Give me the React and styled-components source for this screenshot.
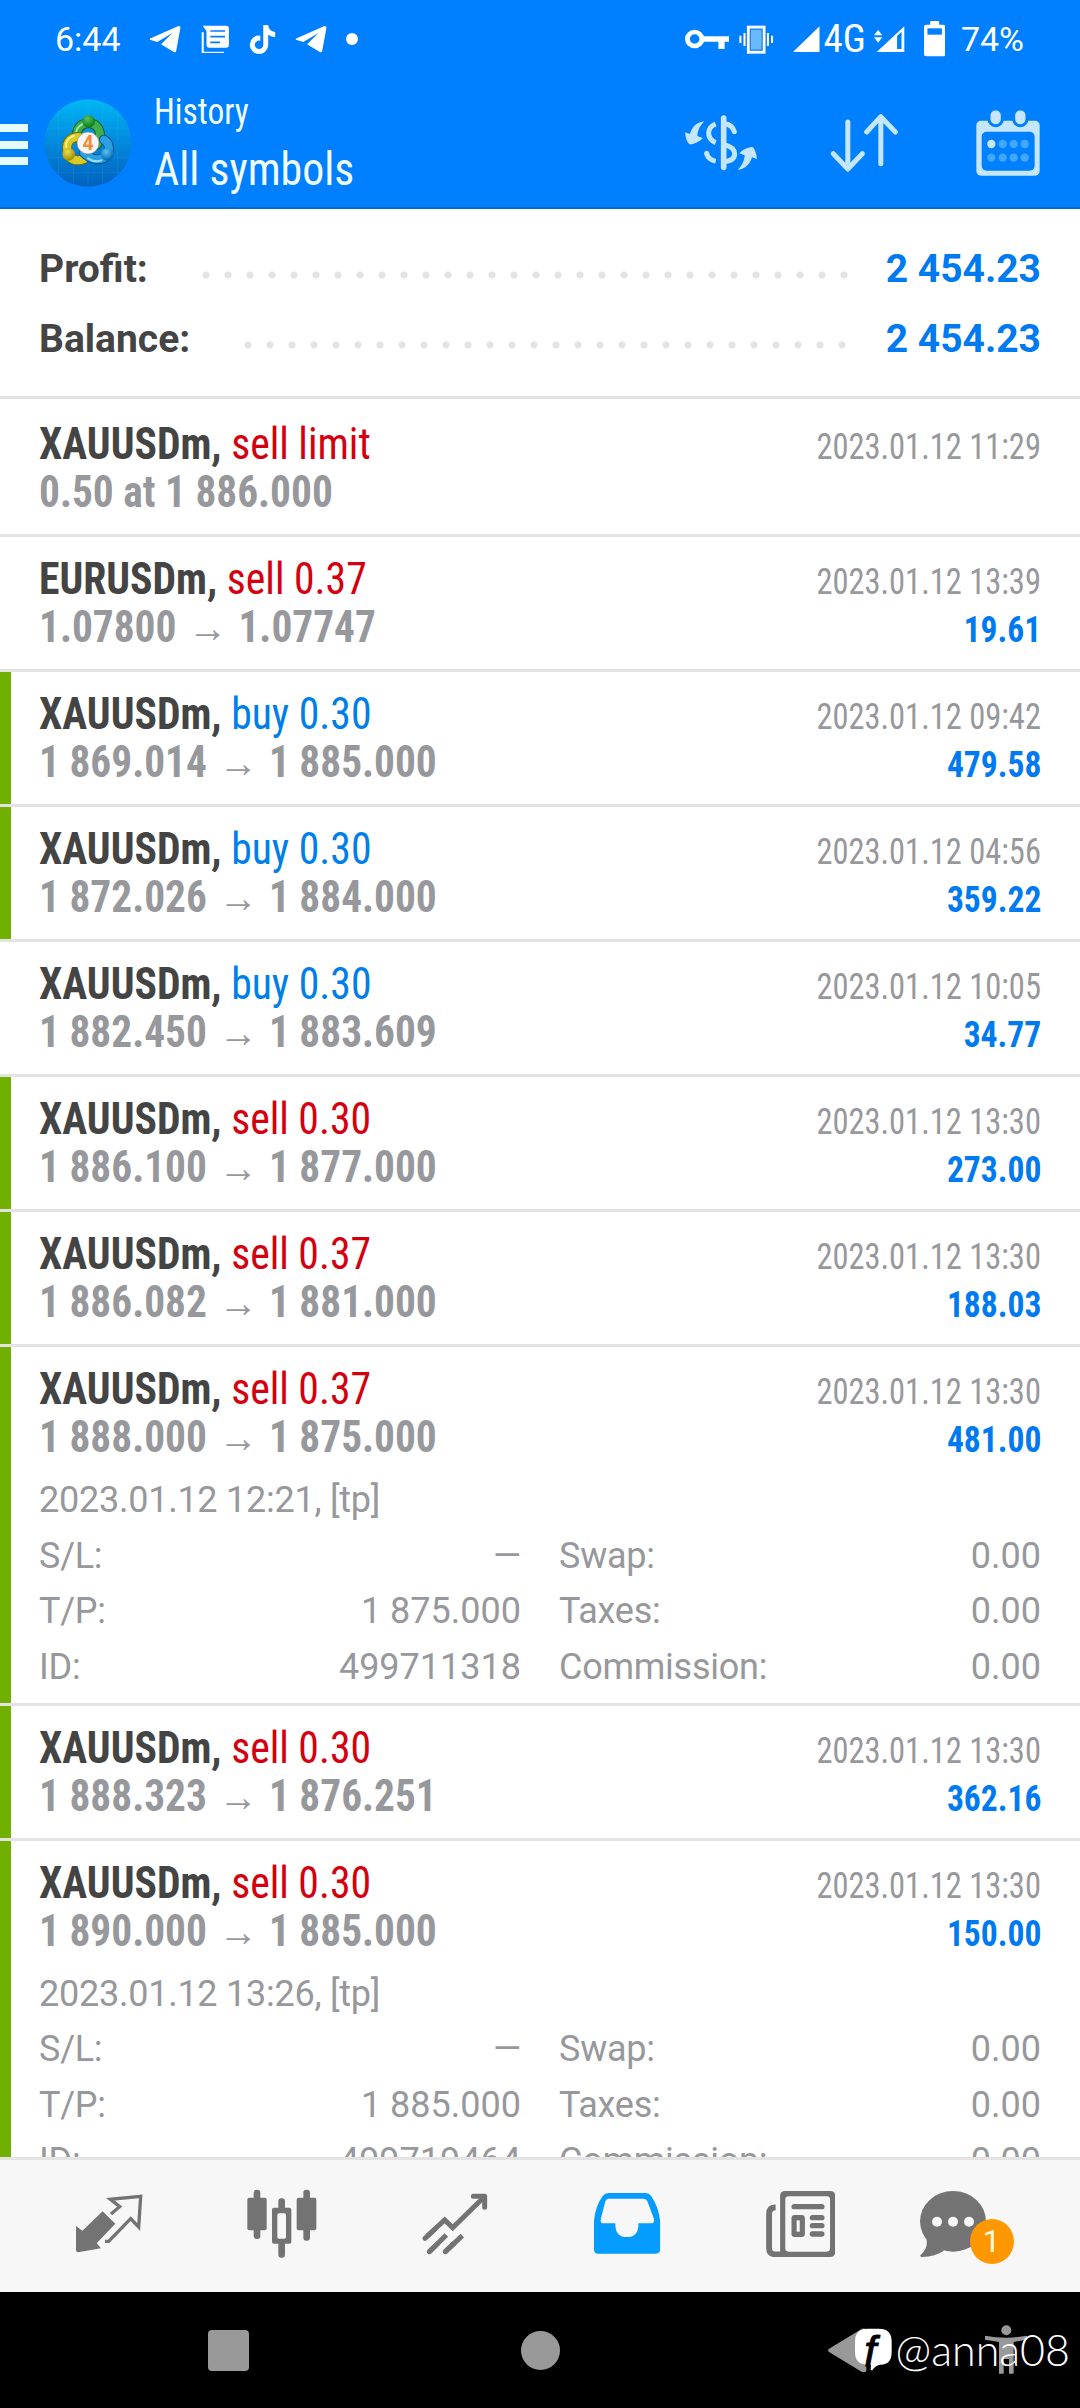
import React from 'react';
import styled, { createGlobalStyle } from 'styled-components';
import { FaTiktok } from 'react-icons/fa';

const GlobalStyle = createGlobalStyle`
  * {
    box-sizing: border-box;
  }
  body {
    margin: 0;
    background: #fff;
    font-family: Roboto, sans-serif;
  }
  svg {
    display: block;
    flex: none;
  }
`;

const condensed = "'Roboto Condensed', Roboto, sans-serif";

const StyledPhone = styled.div`
  width: 1080px;
  height: 2408px;
  display: flex;
  flex-direction: column;
  overflow: hidden;
  position: relative;
`;
const StyledHeader = styled.header`
  height: 209px;
  flex: none;
  background: #007fff;
  border-bottom: 2px solid #0069c9;
  color: #f0fdff;
`;
const StyledStatusBar = styled.div`
  height: 78px;
  display: flex;
  align-items: center;
  justify-content: space-between;
  padding: 0 56px 0 55px;
  color: #fff;
  font-size: 34px;
`;
const StyledStatusGroup = styled.div`
  display: flex;
  align-items: center;
  gap: ${({ $gap }) => $gap}px;
`;
const StyledStatusItem = styled.span`
  margin: 0 ${({ $right }) => $right || 0}px 0 ${({ $left }) => $left || 0}px;
`;
const StyledNetwork = styled.span`
  font-family: ${condensed};
  font-size: 39px;
  line-height: 39px;
  margin: 0 -2px 0 -6px;
`;
const StyledStatusDot = styled.i`
  width: 12px;
  height: 12px;
  margin-left: -2px;
  border-radius: 50%;
  background: #fff;
`;
const StyledToolbar = styled.div`
  height: 129px;
  display: flex;
  align-items: center;
`;
const StyledMenu = styled.div`
  width: 28px;
  height: 41px;
  margin-right: 16px;
  margin-top: 4px;
  display: flex;
  flex-direction: column;
  justify-content: space-between;

  i {
    height: 8px;
    background: #e6fbff;
  }
`;
const StyledTitle = styled.div`
  flex: 1;
  margin-left: 22px;
  font-family: ${condensed};
  transform-origin: 0 50%;
  transform: scaleX(0.932);
`;
const StyledSmallTitle = styled.div`
  font-size: 36px;
  line-height: 51px;
`;
const StyledBigTitle = styled.div`
  font-size: 47px;
  line-height: 61px;
`;
const StyledActions = styled.div`
  display: flex;
  align-items: center;
  margin-right: 40px;
  gap: 71px;
`;
const StyledSummary = styled.section`
  flex: none;
  padding: 25px 39px 22px;
  height: 190px;
  border-bottom: 3px solid #e3e3e3;
`;
const StyledSummaryRow = styled.div`
  display: flex;
  height: 70px;
  line-height: 70px;
  font-size: 39px;
  font-weight: 700;
  color: #444;
`;
const StyledDots = styled.div`
  flex: 1;
  height: 8px;
  margin: 37px 28px 0 47px;
  background: radial-gradient(circle, #e3e3e3 3.2px, transparent 3.9px) 0 0 /
    22px 8px;
`;
const StyledAmount = styled.span`
  color: #007af0;
`;
const StyledList = styled.main`
  flex: 1;
  min-height: 0;
  overflow: hidden;
  padding-top: 3px;
`;
const StyledDeal = styled.article`
  border-bottom: 3px solid #e3e3e3;
  background: linear-gradient(#70b000, #70b000) no-repeat 0 0 /
    ${({ $closedByTp }) => ($closedByTp ? '11px' : '0')} 100%;
  background-clip: padding-box;
  padding: 18px 39px ${({ $open }) => ($open ? '7px' : '17px')};
`;
const StyledDealLine = styled.div`
  display: flex;
  justify-content: space-between;
  align-items: baseline;
  height: ${({ $h }) => $h}px;
  line-height: ${({ $h }) => $h}px;
  font-family: ${condensed};
  white-space: pre;
`;
const StyledSymbol = styled.span`
  font-size: 44px;
  font-weight: 700;
  color: #444;
  transform-origin: 0 50%;
  transform: scaleX(0.947);
`;
const StyledSide = styled.span`
  font-weight: 400;
  color: ${({ $side }) => ($side === 'buy' ? '#007fea' : '#d4000f')};
`;
const StyledPrice = styled.span`
  font-size: 44px;
  font-weight: 700;
  color: #97989c;
  transform-origin: 0 50%;
  transform: scaleX(0.94);
`;
const StyledArrow = styled.span`
  display: inline-block;
  width: 66px;
  text-align: center;
  font-size: 42px;
  font-weight: 400;
`;
const StyledDate = styled.span`
  font-size: 36px;
  color: #97989c;
  transform-origin: 100% 50%;
  transform: scaleX(0.902);
`;
const StyledProfit = styled.span`
  font-size: 36px;
  font-weight: 700;
  color: #007af0;
  transform-origin: 100% 50%;
  transform: scaleX(0.932);
`;
const StyledDetails = styled.div`
  margin-top: 11px;
  display: grid;
  grid-template-columns: 1fr 1fr;
  column-gap: 38px;
  font-size: 36px;
  line-height: 55.67px;
  color: #97989c;
`;
const StyledOpened = styled.div`
  grid-column: 1 / -1;
  letter-spacing: -0.25px;
`;
const StyledField = styled.div`
  display: flex;
  justify-content: space-between;
`;
const StyledFieldLabel = styled.span`
  letter-spacing: -0.25px;
`;
const StyledTabs = styled.nav`
  flex: none;
  height: 135px;
  border-top: 3px solid #e3e3e3;
  background: #f7f7f7;
  display: grid;
  grid-template-columns: repeat(6, 173px);
  padding: 0 0 5px 22px;
`;
const StyledTab = styled.div`
  display: flex;
  align-items: center;
  justify-content: center;
  padding-right: ${({ $shift }) => $shift || 0}px;
`;
const StyledChat = styled.div`
  position: relative;
`;
const StyledBadge = styled.span`
  position: absolute;
  left: 50px;
  top: 28px;
  width: 44px;
  height: 45px;
  border-radius: 50%;
  background: #ff9800;
  color: #fffbe0;
  font-size: 31px;
  line-height: 46px;
  text-align: center;
`;
const StyledSystemBar = styled.footer`
  flex: none;
  height: 116px;
  background: #000;
  display: flex;
  align-items: center;
  padding-left: 208px;
`;
const StyledRecent = styled.i`
  width: 41px;
  height: 41px;
  border-radius: 4px;
  background: #999;
`;
const StyledHome = styled.i`
  width: 39px;
  height: 39px;
  border-radius: 50%;
  background: #999;
  margin: 0 268px 0 272px;
`;
const StyledAccessibility = styled.div`
  margin-left: 118px;
`;
const StyledWatermark = styled.div`
  position: absolute;
  right: 10px;
  bottom: 33px;
  display: flex;
  align-items: center;
  gap: 4px;
  color: #fff;
  font-family: Lato, sans-serif;
  font-weight: 300;
  font-size: 43px;
  line-height: 50px;
`;

const header = '#007fff';
const pale = '#c5e6ff';
const gray = '#737373';
const tabsBg = '#f7f7f7';

// x, y, w, h are in drawing units, the scales turn them into pixels
const Icon = ({ box, sx = 3, sy = 3, children, ...rest }) => (
  <svg
    width={box[2] / sx}
    height={box[3] / sy}
    viewBox={box.join(' ')}
    preserveAspectRatio="none"
    {...rest}
  >
    {children}
  </svg>
);

const TelegramIcon = () => (
  <Icon box={[432, 76, 94, 84]} sx={2.904} fill="#fff">
    <path d="M437 116 L516 80 Q524 77 523 86 L511 154 Q509 160 503 156 L467 134 L500 100 L456 127 L437 121 Q431 119 437 116Z" />
  </Icon>
);

const NewsStatusIcon = () => (
  <Icon box={[579, 72, 82, 86]} sx={2.904}>
    <path d="M584 94 V155 H646" fill="none" stroke="#fff" strokeWidth="6" />
    <path
      d="M584 74 H652 Q660 74 660 82 V132 Q660 140 652 140 H603 Q595 140 595 132 V90Z"
      fill="#fff"
    />
    <path
      d="M606 90 H649 M606 107 H649 M606 124 H634"
      stroke={header}
      strokeWidth="5"
    />
  </Icon>
);

const KeyIcon = () => (
  <Icon box={[420, 85, 130, 62]} sx={2.904}>
    <circle cx="448" cy="115" r="21" fill="none" stroke="#fff" strokeWidth="14" />
    <path d="M472 107 H549 V123 H535 V145 H517 V123 H472Z" fill="#fff" />
  </Icon>
);

const VibrateIcon = () => (
  <Icon box={[580, 72, 100, 87]} sx={2.904}>
    <rect x="607" y="78" width="46" height="76" fill="#6bbaff" stroke="#fff" strokeWidth="8" />
    <rect x="613" y="85" width="34" height="62" fill="none" stroke="#1a7fe0" strokeWidth="3" />
    <path
      d="M596 96 V135 M584 104 V126 M664 96 V135 M676 104 V126"
      stroke="#fff"
      strokeWidth="6"
    />
  </Icon>
);

const SignalIcon = () => (
  <Icon box={[736, 77, 78, 79]} sx={2.904}>
    <path d="M736 155 H813 V78Z" fill="#fff" />
  </Icon>
);

const SignalDataIcon = () => (
  <Icon box={[973, 77, 89, 79]} sx={2.904}>
    <path d="M981 155 H1061 V78Z" fill="#fff" />
    <path d="M1040 107 L1053 94 V146 H1040Z" fill={header} />
    <path d="M973 105 H997 L985 89Z M973 111 H997 L985 127Z" fill="#fff" />
  </Icon>
);

const BatteryIcon = () => (
  <Icon box={[1117, 61, 62, 107]} sx={2.904}>
    <rect x="1135" y="61" width="26" height="20" rx="3" fill="#fff" />
    <rect x="1117" y="72" width="62" height="95" rx="7" fill="#fff" />
    <rect x="1127" y="83" width="42" height="19" fill={header} />
  </Icon>
);

const AccountIcon = () => (
  <Icon box={[132, 28, 264, 264]}>
    <defs>
      <linearGradient id="sky" x1="0" y1="0" x2="0" y2="1">
        <stop offset="0" stopColor="#00b7f5" />
        <stop offset="0.5" stopColor="#0288dc" />
        <stop offset="1" stopColor="#0062bd" />
      </linearGradient>
      <radialGradient id="greenBall" cx="0.4" cy="0.3" r="0.7">
        <stop offset="0" stopColor="#5cc060" />
        <stop offset="1" stopColor="#067a1c" />
      </radialGradient>
      <radialGradient id="yellowBall" cx="0.4" cy="0.3" r="0.7">
        <stop offset="0" stopColor="#eedc50" />
        <stop offset="1" stopColor="#9a8c00" />
      </radialGradient>
      <radialGradient id="blueBall" cx="0.4" cy="0.3" r="0.7">
        <stop offset="0" stopColor="#5cc4f5" />
        <stop offset="1" stopColor="#0064b0" />
      </radialGradient>
    </defs>
    <circle cx="264" cy="160" r="131" fill="url(#sky)" />
    <path
      d="M176 64 V256 M220 38 V282 M264 29 V291 M308 38 V282 M352 64 V256 M145 115 H383 M134 160 H394 M139 204 H389 M166 248 H362"
      stroke="#5fc8ff"
      strokeOpacity="0.18"
      strokeWidth="2"
    />
    <g fill="none" strokeLinecap="round">
      <path d="M231 146 C228 118 240 102 266 100 C292 102 304 122 299 150 L290 165" stroke="#14591f" strokeWidth="30" />
      <path d="M231 146 C228 118 240 102 266 100 C292 102 304 122 299 150 L290 165" stroke="#3fae4d" strokeWidth="24" />
      <path d="M228 126 C232 112 242 104 256 100" stroke="#a5e0a0" strokeWidth="6" />
      <path d="M236 142 C206 142 196 164 204 192 C212 212 230 216 252 208" stroke="#756c08" strokeWidth="30" />
      <path d="M236 142 C206 142 196 164 204 192 C212 212 230 216 252 208" stroke="#d9cb26" strokeWidth="24" />
      <path d="M198 172 C196 156 206 142 222 138" stroke="#f7f08a" strokeWidth="6" />
      <path d="M312 150 C330 160 330 182 320 200 C302 214 274 212 252 190" stroke="#07508c" strokeWidth="30" />
      <path d="M312 150 C330 160 330 182 320 200 C302 214 274 212 252 190" stroke="#2aa0e0" strokeWidth="24" />
      <path d="M264 206 C278 216 292 216 304 212" stroke="#9adcff" strokeWidth="6" />
    </g>
    <circle cx="266" cy="95" r="19" fill="url(#greenBall)" />
    <circle cx="206" cy="194" r="19" fill="url(#yellowBall)" />
    <circle cx="322" cy="194" r="19" fill="url(#blueBall)" />
    <circle cx="264" cy="160" r="33" fill="#f6f6f6" stroke="#8a8a80" strokeWidth="2" />
    <text x="264" y="181" fontSize="58" fontWeight="700" textAnchor="middle" fill="#f58a33">
      4
    </text>
  </Icon>
);

const DollarIcon = () => (
  <Icon box={[45, 38, 225, 172]}>
    <g fill="none" stroke={pale} strokeWidth="15">
      <path d="M164 50 V198" strokeWidth="17" strokeLinecap="round" />
      <path d="M168 67 Q190 70 196 91" strokeLinecap="round" />
      <path d="M166 130 Q197 138 197 158 Q197 178 166 181" />
      <path d="M140 68 Q119 76 119 95 Q119 115 140 124" />
      <path d="M113 157 Q118 175 140 180" />
    </g>
    <circle cx="113" cy="156" r="7.500" fill={pale} />
    <g fill={pale}>
      <path
        id="swing"
        d="M106 60 C86 62 70 74 63 98 L48 93 C50 110 54 124 62 129 C72 129 92 122 101 110 L85 104 C86 86 94 72 106 60Z"
      />
      <use href="#swing" transform="rotate(180 156 133)" />
    </g>
  </Icon>
);

const SortIcon = () => (
  <Icon box={[482, 38, 224, 178]}>
    <path
      d="M535.500 65 V204 M492 160 L535.500 206 L579 160 M634.500 190 V50 M592 95 L634.500 49 L678 95"
      fill="none"
      stroke={pale}
      strokeWidth="15"
      strokeLinecap="round"
      strokeLinejoin="round"
    />
  </Icon>
);

const CalendarIcon = () => (
  <Icon box={[919, 22, 192, 202]}>
    <rect x="920" y="57" width="190" height="165" rx="14" fill={pale} />
    <rect x="936" y="90" width="159" height="117" rx="15" fill={header} />
    <g fill={pale} stroke={header} strokeWidth="9">
      <rect x="958" y="22" width="40" height="50" rx="19" />
      <rect x="1032" y="22" width="40" height="50" rx="19" />
    </g>
    {[127, 168].map((cy) =>
      [965, 999, 1032, 1065].map((cx) => (
        <circle
          key={`${cx}-${cy}`}
          cx={cx}
          cy={cy}
          r="12.500"
          fill={cx === 965 && cy === 127 ? pale : '#40a9ff'}
        />
      ))
    )}
  </Icon>
);

const TradeIcon = () => (
  <Icon box={[44, 74, 204, 176]}>
    <path
      d="M127 126 L165 163 L109 222 L122 237 L53 249 Q47 249 47 243 L47 170 L66 184Z"
      fill={gray}
    />
    <path
      d="M152 134 L178 112 L150 90 L241 81 L235 173 L211 148 L145 216 H134"
      fill="none"
      stroke={gray}
      strokeWidth="10"
    />
  </Icon>
);

const CandlesIcon = () => (
  <Icon box={[556, 58, 214, 208]} fill={gray}>
    <rect x="579" y="60" width="20" height="148" rx="9" />
    <rect x="560" y="84" width="58" height="98" rx="6" />
    <rect x="728" y="60" width="20" height="153" rx="9" />
    <rect x="708" y="84" width="59" height="98" rx="6" />
    <rect x="653" y="86" width="20" height="178" rx="9" />
    <rect x="634" y="114" width="58" height="108" rx="6" />
    <rect x="650" y="131" width="26" height="76" rx="5" fill={tabsBg} />
  </Icon>
);

const ChartIcon = () => (
  <Icon box={[1084, 66, 198, 186]}>
    <g fill="none" stroke={gray} strokeWidth="15">
      <path d="M1100 195 L1152 147 L1176 170 L1268 80" />
      <path d="M1093 202 L1120 177 M1106 242 L1130 219 M1154 242 L1180 217" strokeLinecap="round" />
      <path d="M1238 76 H1272 V109" strokeLinecap="round" strokeLinejoin="round" />
      <path d="M1106 242 L1157 192 M1154 242 L1205 194" />
    </g>
  </Icon>
);

const InboxIcon = () => (
  <Icon box={[158, 278, 192, 183]} sx={2.904}>
    <path
      d="M158 448 V362 Q162 315 184 286 Q190 278 200 278 H308 Q318 278 324 287 Q346 320 350 362 V447 Q350 460 338 460 H170 Q158 460 158 448Z"
      fill="#049dff"
    />
    <path
      d="M200 295 H302 Q310 295 313 303 L332 355 Q334 369 324 369 H287 V376 Q285 410 253 410 Q222 410 220 376 V369 H186 Q175 369 178 355 L191 303 Q194 295 200 295Z"
      fill={tabsBg}
    />
  </Icon>
);

const NewsIcon = () => (
  <Icon box={[657, 270, 202, 198]} sx={2.904}>
    <path
      d="M685 319 Q666 319 666 338 V442 Q666 460 684 460 H712"
      fill="none"
      stroke={gray}
      strokeWidth="17"
    />
    <rect x="698" y="270" width="160" height="198" rx="14" fill={gray} />
    <rect x="713" y="286" width="130" height="166" rx="10" fill={tabsBg} />
    <g fill={gray}>
      <rect x="731" y="309" width="96" height="16" rx="8" />
      <rect x="731" y="342" width="39" height="66" rx="9" />
      <rect x="784" y="342" width="43" height="16" rx="8" />
      <rect x="784" y="366" width="43" height="16" rx="8" />
      <rect x="784" y="391" width="43" height="16" rx="8" />
    </g>
    <rect x="746" y="358" width="9" height="34" fill={tabsBg} />
  </Icon>
);

const ChatIcon = () => (
  <Icon box={[300, 30, 198, 198]}>
    <ellipse cx="399" cy="121" rx="99" ry="91" fill={gray} />
    <path d="M318 168 C326 200 312 212 301 223 Q300 229 308 228 Q345 226 372 209Z" fill={gray} />
    <circle cx="351" cy="122" r="15" fill={tabsBg} />
    <circle cx="399" cy="122" r="15" fill={tabsBg} />
    <circle cx="447" cy="122" r="15" fill={tabsBg} />
  </Icon>
);

const BackIcon = () => (
  <Icon box={[25, 444, 116, 134]}>
    <path d="M27 507 L127 446 Q140 443 140 452 V570 Q140 580 127 576 L27 515 Q24 511 27 507Z" fill="#999" />
  </Icon>
);

const PersonIcon = () => (
  <Icon box={[494, 436, 128, 148]} fill="#999">
    <circle cx="558" cy="452" r="15" />
    <path d="M494 468 Q558 480 622 468 V480 L580 487 V582 H566 V538 H550 V582 H536 V487 L494 480Z" />
  </Icon>
);

const ProfileIcon = () => (
  <Icon box={[98, 450, 110, 130]}>
    <path
      d="M136 452 H170 Q208 452 208 490 V522 Q208 560 175 560 Q158 562 150 577 L145 577 L146 560 H136 Q98 560 98 522 V490 Q98 452 136 452Z"
      fill="#fff"
    />
    <text
      x="126"
      y="563"
      fontFamily="Liberation Sans, sans-serif"
      fontSize="130"
      fontStyle="italic"
      fontWeight="400"
      fill="#000"
      stroke="#000"
      strokeWidth="3"
    >
      f
    </text>
  </Icon>
);

const deals = [
  { symbol: 'XAUUSDm', side: 'sell', volume: 'limit', from: '0.50 at 1 886.000', date: '11:29' },
  { symbol: 'EURUSDm', side: 'sell', volume: '0.37', from: '1.07800', to: '1.07747', date: '13:39', profit: '19.61' },
  { symbol: 'XAUUSDm', side: 'buy', volume: '0.30', from: '1 869.014', to: '1 885.000', date: '09:42', profit: '479.58', tp: true },
  { symbol: 'XAUUSDm', side: 'buy', volume: '0.30', from: '1 872.026', to: '1 884.000', date: '04:56', profit: '359.22', tp: true },
  { symbol: 'XAUUSDm', side: 'buy', volume: '0.30', from: '1 882.450', to: '1 883.609', date: '10:05', profit: '34.77' },
  { symbol: 'XAUUSDm', side: 'sell', volume: '0.30', from: '1 886.100', to: '1 877.000', date: '13:30', profit: '273.00', tp: true },
  { symbol: 'XAUUSDm', side: 'sell', volume: '0.37', from: '1 886.082', to: '1 881.000', date: '13:30', profit: '188.03', tp: true },
  {
    symbol: 'XAUUSDm', side: 'sell', volume: '0.37', from: '1 888.000', to: '1 875.000', date: '13:30', profit: '481.00', tp: true,
    details: { opened: '2023.01.12 12:21, [tp]', tp: '1 875.000', id: '499711318' },
  },
  { symbol: 'XAUUSDm', side: 'sell', volume: '0.30', from: '1 888.323', to: '1 876.251', date: '13:30', profit: '362.16', tp: true },
  {
    symbol: 'XAUUSDm', side: 'sell', volume: '0.30', from: '1 890.000', to: '1 885.000', date: '13:30', profit: '150.00', tp: true,
    details: { opened: '2023.01.12 13:26, [tp]', tp: '1 885.000', id: '499719464' },
  },
];

const Field = ({ label, value }) => (
  <StyledField>
    <StyledFieldLabel>{label}</StyledFieldLabel>
    <span>{value}</span>
  </StyledField>
);

const Details = ({ opened, tp, id }) => (
  <StyledDetails>
    <StyledOpened>{opened}</StyledOpened>
    <Field label="S/L:" value="—" />
    <Field label="Swap:" value="0.00" />
    <Field label="T/P:" value={tp} />
    <Field label="Taxes:" value="0.00" />
    <Field label="ID:" value={id} />
    <Field label="Commission:" value="0.00" />
  </StyledDetails>
);

const Deal = ({ symbol, side, volume, from, to, date, profit, tp, details }) => (
  <StyledDeal $closedByTp={tp} $open={!!details}>
    <StyledDealLine $h={48}>
      <StyledSymbol>
        {symbol}, <StyledSide $side={side}>{`${side} ${volume}`}</StyledSide>
      </StyledSymbol>
      <StyledDate>2023.01.12 {date}</StyledDate>
    </StyledDealLine>
    <StyledDealLine $h={49}>
      <StyledPrice>
        {from}
        {to && <StyledArrow>→</StyledArrow>}
        {to}
      </StyledPrice>
      {profit && <StyledProfit>{profit}</StyledProfit>}
    </StyledDealLine>
    {details && <Details {...details} />}
  </StyledDeal>
);

export default function App() {
  return (
    <StyledPhone>
      <GlobalStyle />
      <StyledHeader>
        <StyledStatusBar>
          <StyledStatusGroup $gap={20}>
            <StyledStatusItem $right={8}>6:44</StyledStatusItem>
            <TelegramIcon />
            <NewsStatusIcon />
            <StyledStatusItem $left={-1} $right={-2}>
              <FaTiktok size={29} />
            </StyledStatusItem>
            <TelegramIcon />
            <StyledStatusDot />
          </StyledStatusGroup>
          <StyledStatusGroup $gap={10}>
            <KeyIcon />
            <StyledStatusItem $right={9}>
              <VibrateIcon />
            </StyledStatusItem>
            <SignalIcon />
            <StyledNetwork>4G</StyledNetwork>
            <StyledStatusItem $right={9}>
              <SignalDataIcon />
            </StyledStatusItem>
            <BatteryIcon />
            <StyledStatusItem $left={6}>74%</StyledStatusItem>
          </StyledStatusGroup>
        </StyledStatusBar>
        <StyledToolbar>
          <StyledMenu>
            <i />
            <i />
            <i />
          </StyledMenu>
          <AccountIcon />
          <StyledTitle>
            <StyledSmallTitle>History</StyledSmallTitle>
            <StyledBigTitle>All symbols</StyledBigTitle>
          </StyledTitle>
          <StyledActions>
            <DollarIcon />
            <SortIcon />
            <CalendarIcon />
          </StyledActions>
        </StyledToolbar>
      </StyledHeader>

      <StyledSummary>
        <StyledSummaryRow>
          <span>Profit:</span>
          <StyledDots />
          <StyledAmount>2 454.23</StyledAmount>
        </StyledSummaryRow>
        <StyledSummaryRow>
          <span>Balance:</span>
          <StyledDots />
          <StyledAmount>2 454.23</StyledAmount>
        </StyledSummaryRow>
      </StyledSummary>

      <StyledList>
        {deals.map((deal, index) => (
          <Deal key={index} {...deal} />
        ))}
      </StyledList>

      <StyledTabs>
        <StyledTab>
          <TradeIcon />
        </StyledTab>
        <StyledTab>
          <CandlesIcon />
        </StyledTab>
        <StyledTab>
          <ChartIcon />
        </StyledTab>
        <StyledTab>
          <InboxIcon />
        </StyledTab>
        <StyledTab>
          <NewsIcon />
        </StyledTab>
        <StyledTab $shift={42}>
          <StyledChat>
            <ChatIcon />
            <StyledBadge>1</StyledBadge>
          </StyledChat>
        </StyledTab>
      </StyledTabs>

      <StyledSystemBar>
        <StyledRecent />
        <StyledHome />
        <BackIcon />
        <StyledAccessibility>
          <PersonIcon />
        </StyledAccessibility>
      </StyledSystemBar>
      <StyledWatermark>
        <ProfileIcon />
        @anna08
      </StyledWatermark>
    </StyledPhone>
  );
}
